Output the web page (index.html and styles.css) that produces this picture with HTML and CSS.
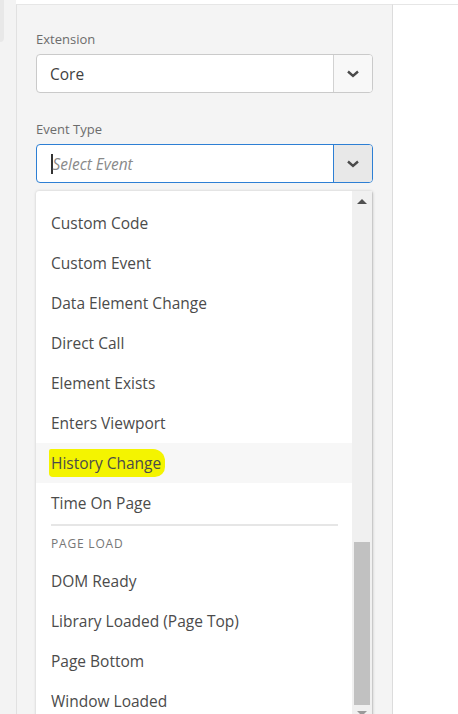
FILE: index.html
```html
<!DOCTYPE html>
<html>
<head>
<meta charset="utf-8">
<link rel="stylesheet" href="styles.css">
</head>
<body>
<div class="page">
  <div class="rail"><div class="rail-tab"></div></div>
  <div class="panel">
    <div class="field">
      <label class="label">Extension</label>
      <div class="select">
        <div class="select-value">Core</div>
        <div class="select-btn">
          <svg width="14" height="10" viewBox="0 0 14 10"><path d="M2 2.5 L7 7 L12 2.5" fill="none" stroke="#4b4b4b" stroke-width="2.4"/></svg>
        </div>
      </div>
    </div>
    <div class="field field-event">
      <label class="label">Event Type</label>
      <div class="select select-focus">
        <div class="select-value placeholder"><span class="caret"></span>Select Event</div>
        <div class="select-btn btn-active">
          <svg width="14" height="10" viewBox="0 0 14 10"><path d="M2 2.5 L7 7 L12 2.5" fill="none" stroke="#4b4b4b" stroke-width="2.4"/></svg>
        </div>
      </div>
      <div class="menu">
        <ul class="list">
          <li class="item">Custom Code</li>
          <li class="item">Custom Event</li>
          <li class="item">Data Element Change</li>
          <li class="item">Direct Call</li>
          <li class="item">Element Exists</li>
          <li class="item">Enters Viewport</li>
          <li class="item item-hover"><span class="mark">History Change</span></li>
          <li class="item">Time On Page</li>
          <li class="divider"></li>
          <li class="heading">PAGE LOAD</li>
          <li class="item">DOM Ready</li>
          <li class="item">Library Loaded (Page Top)</li>
          <li class="item">Page Bottom</li>
          <li class="item">Window Loaded</li>
        </ul>
        <div class="scrollbar">
          <div class="arrow-up"></div>
          <div class="thumb"></div>
          <div class="arrow-down"></div>
        </div>
      </div>
    </div>
  </div>
  <div class="right"></div>
</div>
</body>
</html>
```
FILE: styles.css
```css
html, body {
  margin: 0;
  padding: 0;
  height: 100%;
  overflow: hidden;
  background: #ffffff;
  font-family: "Open Sans", "Noto Sans", sans-serif;
}
.page {
  display: flex;
  height: 714px;
}
.rail {
  width: 16px;
  background: #f3f3f3;
  flex: none;
}
.rail-tab {
  width: 4px;
  height: 42px;
  background: #e8e8e8;
  border-bottom-right-radius: 4px;
}
.panel {
  width: 377px;
  flex: none;
  margin-top: 4px;
  background: #f4f4f4;
  border-left: 1px solid #e1e1e1;
  border-right: 1px solid #dcdcdc;
  border-top: 1px solid #e6e6e6;
  padding: 25px 19px 0 19px;
  box-sizing: border-box;
  height: 710px;
}
.right {
  flex: 1;
  margin-top: 4px;
  border-top: 1px solid #e6e6e6;
  background: #fff;
}
.field {
  display: flex;
  flex-direction: column;
}
.label {
  font-size: 13px;
  color: #6c6c6c;
  line-height: 18px;
  height: 18px;
  margin-bottom: 6px;
}
.field-event {
  margin-top: 27px;
}
.select {
  display: flex;
  height: 39px;
  box-sizing: border-box;
  border: 1px solid #cacaca;
  border-radius: 4px;
  background: #fff;
  overflow: hidden;
}
.select-focus {
  border-color: #2d7fd4;
}
.select-value {
  flex: 1;
  display: flex;
  align-items: center;
  padding-left: 13px;
  font-size: 15.5px;
  color: #3f3f3f;
}
.placeholder {
  font-style: italic;
  color: #8a8a8a;
  padding-left: 14px;
}
.caret {
  display: inline-block;
  width: 1.5px;
  height: 20px;
  background: #333;
}
.select-btn {
  width: 38px;
  flex: none;
  border-left: 1px solid #d2d2d2;
  background: #f8f8f8;
  display: flex;
  align-items: center;
  justify-content: center;
}
.btn-active {
  background: #e8e8e8;
  border-left-color: #2d7fd4;
}
.menu {
  margin-top: 8px;
  display: flex;
  background: #fff;
  border-radius: 3px 3px 0 0;
  box-shadow: 0 0 3px rgba(0,0,0,0.18);
  height: 540px;
  overflow: hidden;
}
.list {
  list-style: none;
  margin: 0;
  padding: 12px 0 0 0;
  flex: 1;
}
.item {
  height: 40px;
  line-height: 40px;
  padding-left: 15px;
  font-size: 15.5px;
  color: #4b4b4b;
}
.item-hover {
  background: #f7f7f7;
}
.mark {
  background: #f4f400;
  border-radius: 2px 12px 10px 4px;
  padding: 3px 4px 3px 2px;
  margin-left: -2px;
}
.divider {
  height: 2px;
  background: #e6e6e6;
  margin: 1px 14px 0 15px;
}
.heading {
  height: 35px;
  line-height: 35px;
  padding-left: 15px;
  font-size: 12px;
  letter-spacing: 0.8px;
  color: #767676;
}
.scrollbar {
  width: 20px;
  flex: none;
  background: #f0f0f0;
  border-right: 1px solid #c9c9c9;
  position: relative;
}
.arrow-up {
  width: 0;
  height: 0;
  margin: 8px auto 0;
  border-left: 5px solid transparent;
  border-right: 5px solid transparent;
  border-bottom: 5px solid #505050;
}
.thumb {
  position: absolute;
  left: 2px;
  right: 2px;
  top: 351px;
  height: 163px;
  background: #c1c1c1;
}
.arrow-down {
  position: absolute;
  left: 5px;
  top: 520px;
  width: 0;
  height: 0;
  border-left: 5px solid transparent;
  border-right: 5px solid transparent;
  border-top: 5px solid #9a9a9a;
}
```
